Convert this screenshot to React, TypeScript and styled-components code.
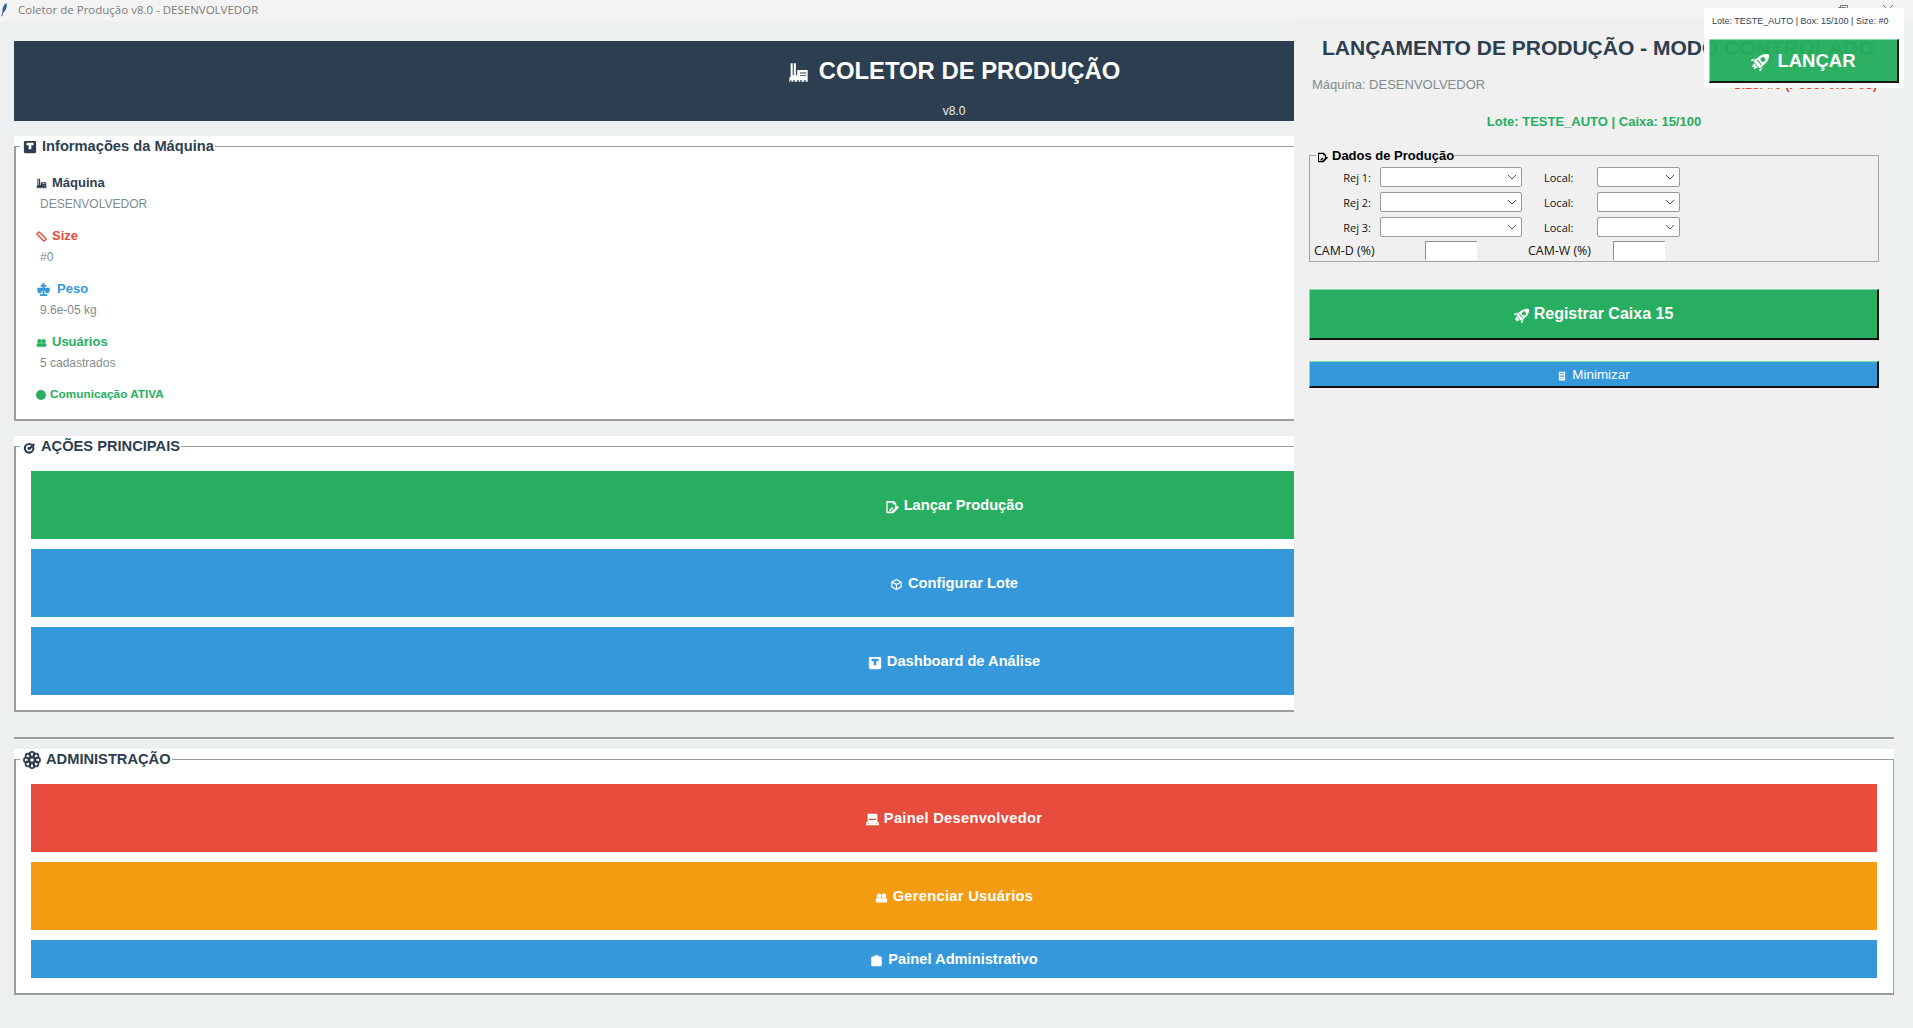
import React from "react";
import styled, { createGlobalStyle } from "styled-components";

const GlobalStyle = createGlobalStyle`
  html, body {
    margin: 0;
    padding: 0;
    background: #ecf0f1;
  }
  * {
    box-sizing: border-box;
  }
`;

const SANS = `"Liberation Sans", Arial, sans-serif`;
const UI = `"Open Sans", "Noto Sans", sans-serif`;

const Page = styled.div`
  position: relative;
  width: 1913px;
  height: 1028px;
  overflow: hidden;
  background: #ecf0f1;
  font-family: ${SANS};
`;

const TitleBar = styled.div`
  display: flex;
  align-items: center;
  height: 21px;
  background: #f3f3f3;
  padding: 0 19px 2px 0;
`;

const AppIcon = styled.span`
  display: flex;
  width: 18px;
  color: #2b5c9e;
`;

const TitleText = styled.span`
  font-family: ${UI};
  font-size: 11.5px;
  color: #7b7b7b;
  white-space: nowrap;
`;

const WindowControls = styled.div`
  display: flex;
  gap: 33px;
  margin-left: auto;
  color: #777;
`;

const Main = styled.main`
  display: flex;
  flex-direction: column;
  padding: 20px 19px 0 14px;
`;

const Banner = styled.header`
  height: 80px;
  background: #2c3e50;
  color: #fff;
  text-align: center;
  padding-top: 14px;
`;

const BannerTitle = styled.h1`
  display: flex;
  align-items: center;
  justify-content: center;
  gap: 10px;
  margin: 0;
  height: 32px;
  font-size: 23.85px;
  font-weight: 700;
  svg {
    margin-top: 3px;
  }
`;

const BannerVersion = styled.div`
  margin-top: 17px;
  font-size: 12px;
  line-height: 14px;
  color: #ecf0f1;
`;

const Panel = styled.section<{ $top: number }>`
  margin-top: ${(p) => p.$top}px;
  background: #fff;
`;

const Frame = styled.fieldset<{ $height: number }>`
  margin: 0;
  height: ${(p) => p.$height}px;
  padding: 15px 16px 0 15px;
  border: 1px solid #9d9d9d;
  border-width: 1px 1px 2px 2px;
`;

const FrameLegend = styled.legend`
  display: flex;
  align-items: center;
  gap: 5px;
  height: 20px;
  margin-left: -11px;
  padding: 0 1px 1px 3px;
  font-size: 14.67px;
  font-weight: 700;
  color: #2c3e50;
  white-space: nowrap;
  svg {
    margin-top: 3px;
  }
`;

const InfoList = styled.div`
  display: flex;
  flex-direction: column;
  gap: 10px;
  padding: 1px 0 0 5px;
`;

const InfoItem = styled.div``;

const InfoLabel = styled.div<{ $color: string; $gap: number }>`
  display: flex;
  align-items: center;
  gap: ${(p) => p.$gap}px;
  height: 20px;
  font-size: 13px;
  font-weight: 700;
  color: ${(p) => p.$color};
  svg {
    margin-top: 3px;
  }
`;

const InfoValue = styled.div`
  height: 21px;
  line-height: 21px;
  margin: 2px 0 0 4px;
  font-size: 12px;
  color: #7f8c8d;
`;

const StatusLine = styled.div`
  display: flex;
  align-items: center;
  gap: 4px;
  margin-top: 3px;
  font-size: 11.8px;
  font-weight: 700;
  color: #27ae60;
  svg {
    margin-top: 2px;
  }
`;

const ButtonStack = styled.div`
  display: flex;
  flex-direction: column;
  gap: 10px;
`;

const ActionButton = styled.button<{
  $bg: string;
  $height: number;
  $raised?: boolean;
  $size?: number;
  $gap?: number;
  $track?: number;
}>`
  display: flex;
  align-items: center;
  justify-content: center;
  gap: ${(p) => p.$gap ?? 5}px;
  width: 100%;
  height: ${(p) => p.$height}px;
  padding: 0;
  background: ${(p) => p.$bg};
  color: #fff;
  font-family: ${SANS};
  font-size: ${(p) => p.$size ?? 14.67}px;
  font-weight: 700;
  letter-spacing: ${(p) => p.$track ?? 0}px;
  border: 0;
  svg {
    margin-top: 3px;
  }
  ${(p) =>
    p.$raised &&
    `
    border-style: solid;
    border-width: 1px 2px 2px 1px;
    border-color: #7fe0a8 #111 #111 #7fe0a8;
  `}
`;

const Separator = styled.hr`
  width: 100%;
  height: 3px;
  margin: 25px 0 9px;
  border: 0;
  border-top: 2px solid #9d9d9d;
  background: #fff;
`;

const EntryWindow = styled.aside`
  position: absolute;
  left: 1294px;
  top: 18px;
  width: 600px;
  height: 700px;
  display: flex;
  flex-direction: column;
  padding: 0 15px;
  background: #f0f0f0;
`;

const EntryTitle = styled.h2`
  margin: 18px 0 0 13px;
  height: 24px;
  line-height: 24px;
  font-size: 21px;
  font-weight: 700;
  color: #2c3e50;
  white-space: nowrap;
`;

const EntryMeta = styled.div`
  display: flex;
  justify-content: space-between;
  align-items: center;
  height: 20px;
  margin: 14px 0 0 3px;
  padding-right: 2px;
`;

const MachineText = styled.span`
  font-size: 13px;
  color: #7f8c8d;
`;

const WarnText = styled.span`
  font-size: 13px;
  font-weight: 700;
  color: #f03c30;
`;

const BatchLine = styled.div`
  margin-top: 19px;
  height: 18px;
  line-height: 18px;
  text-align: center;
  font-size: 13px;
  font-weight: 700;
  color: #27ae60;
`;

const DataFrame = styled.fieldset`
  margin: 16px 0 0;
  height: 115px;
  padding: 4px 0 0;
  border: 1px solid #a6a6a6;
  display: flex;
  flex-direction: column;
`;

const DataLegend = styled.legend`
  display: flex;
  align-items: center;
  gap: 4px;
  height: 16px;
  margin-left: 6px;
  padding: 0 0 0 1px;
  font-size: 13px;
  font-weight: 700;
  color: #000;
  white-space: nowrap;
  svg {
    margin-top: 4px;
  }
`;

const FormRow = styled.div`
  display: flex;
  align-items: center;
  height: 20px;
  margin-bottom: 5px;
  font-family: ${UI};
  font-size: 11px;
  color: #111;
`;

const InputRow = styled(FormRow)`
  height: 19px;
  margin-top: -1px;
`;

const RejLabel = styled.label`
  width: 61px;
  margin-right: 1px;
  text-align: right;
`;

const LocalLabel = styled.label`
  width: 53px;
  margin-left: 22px;
`;

const ComboBox = styled.div<{ $width: number; $first?: boolean }>`
  display: flex;
  align-items: center;
  justify-content: flex-end;
  width: ${(p) => p.$width}px;
  height: 20px;
  margin-left: ${(p) => (p.$first ? 8 : 0)}px;
  padding-right: 3px;
  background: #fff;
  border: 1px solid #9a9a9a;
  border-radius: 2px;
  color: #555;
`;

const CamLabel = styled.label<{ $width: number; $left: number }>`
  width: ${(p) => p.$width}px;
  margin-left: ${(p) => p.$left}px;
  font-size: 12.4px;
  white-space: nowrap;
`;

const CamInput = styled.input`
  width: 52px;
  height: 19px;
  padding: 0 2px;
  background: #fff;
  border: 0;
  border-top: 1px solid #8f8f8f;
  border-left: 1px solid #8f8f8f;
  outline: none;
`;

const RegisterWrap = styled.div`
  margin-top: 27px;
`;

const MinimizeWrap = styled.div`
  margin-top: 21px;
`;

const MiniText = styled.span`
  font-weight: 400;
`;

const QuickBar = styled.div`
  position: absolute;
  left: 1704px;
  top: 8px;
  width: 200px;
  height: 80px;
  padding: 6px 5px 0;
  background: #fff;
  opacity: 0.97;
`;

const QuickInfo = styled.div`
  height: 25px;
  padding-left: 3px;
  line-height: 14px;
  font-size: 9px;
  color: #2c3e50;
  white-space: nowrap;
`;

type IconName =
  | "factory"
  | "ruler"
  | "scale"
  | "users"
  | "dot"
  | "panel"
  | "target"
  | "gear"
  | "docPen"
  | "cube"
  | "laptop"
  | "clipboard"
  | "rocket"
  | "phone"
  | "feather";

const GLYPHS: Record<IconName, React.ReactNode> = {
  factory: (
    <path
      fillRule="evenodd"
      d="M1 15v-3l1-1V1h1.600v9h.8V1H6v9h1V6h8v9h-1.600v-1.200h-1V15h-2v-1.200h-1V15H8v-1.200H7V15H5v-1.200H4V15H2.600v-1.200h-.8V15zM9 8v.7h5V8zM9 10v.7h5V10z"
    />
  ),
  ruler: (
    <rect
      x="5.600"
      y="0.500"
      width="4.800"
      height="15"
      rx="1"
      transform="rotate(-45 8 8)"
      fill="none"
      stroke="currentColor"
      strokeWidth="2"
    />
  ),
  scale: (
    <path d="M7 1h2v2h2v2H9v1h5.500v2H15l-1.500 4h-3l-1-3H9v4h3v2H4v-2h3V9h-.5l-1 3h-3L1 8h.5V6H7V5H5V3h2z" />
  ),
  users: (
    <>
      <circle cx="5" cy="6" r="3" />
      <circle cx="11" cy="6" r="3" />
      <rect x="1" y="9" width="14" height="5" rx="1" />
    </>
  ),
  dot: <circle cx="8" cy="8" r="8" />,
  panel: (
    <path
      fillRule="evenodd"
      d="M2.500 1h11A1.500 1.500 0 0 1 15 2.500v11a1.500 1.500 0 0 1-1.500 1.500h-11A1.500 1.500 0 0 1 1 13.500v-11A1.500 1.500 0 0 1 2.500 1zM4 3v3h2.500v4.500h3V6H12V3z"
    />
  ),
  target: (
    <>
      <circle cx="7.500" cy="9" r="5.300" fill="none" stroke="currentColor" strokeWidth="2.600" />
      <circle cx="7.500" cy="9" r="2" />
      <path d="M7 8.500 13 2.500l.5 1.500 1.500.5-6 6z" />
    </>
  ),
  gear: (
    <g fill="none" stroke="currentColor" strokeWidth="1.500">
      <circle cx="8" cy="8" r="2.300" />
      <circle cx="8" cy="3" r="2.200" />
      <circle cx="8" cy="13" r="2.200" />
      <circle cx="3" cy="8" r="2.200" />
      <circle cx="13" cy="8" r="2.200" />
      <circle cx="4.500" cy="4.500" r="2.200" />
      <circle cx="11.500" cy="4.500" r="2.200" />
      <circle cx="4.500" cy="11.500" r="2.200" />
      <circle cx="11.500" cy="11.500" r="2.200" />
    </g>
  ),
  docPen: (
    <path
      fillRule="evenodd"
      d="M1.500 1H10l3 3v3.500l1-1 2 2-6.500 6.500H1.500zM3 3v10h4.500l4-4V5H9V3zM5 11l3-3 1.500 1.500-3 3H5z"
    />
  ),
  cube: (
    <path
      fillRule="evenodd"
      d="M8 1l6.500 3.500v7L8 15l-6.500-3.500v-7zM8 2.800 4 5l4 2.200L12 5zM3 6.300v4.300l4.300 2.300V8.500zM13 6.300 8.700 8.500v4.400l4.300-2.300z"
    />
  ),
  laptop: (
    <path
      fillRule="evenodd"
      d="M2 1h12v10h1.500l.5 4H0l.5-4H2zM3.500 7v1.500h9V7zM2 12.800v.7h2v-.7zM12 12.800v.7h2v-.7z"
    />
  ),
  clipboard: (
    <path d="M5.500 1.500h5V3h2.500a1.500 1.500 0 0 1 1.500 1.500v9A1.500 1.500 0 0 1 13 15H3a1.500 1.500 0 0 1-1.500-1.500v-9A1.500 1.500 0 0 1 3 3h2.500z" />
  ),
  rocket: (
    <g transform="rotate(50 8 8)">
      <path
        fillRule="evenodd"
        d="M8 -2.500C11.500 0 12.200 3.500 12.200 6.500v5.500H3.800V6.500C3.800 3.500 4.500 0 8 -2.500zM8 2.500a2.100 2.100 0 1 0 0 4.200 2.100 2.100 0 0 0 0-4.200zM5.300 8.200v1h5.400v-1z"
      />
      <path d="M3.200 8.500v4.700H1.200zM12.800 8.500v4.700h2zM5.500 12.600h5l-.9 3.400H8.800L8 14.600 7.200 16h-.8z" />
    </g>
  ),
  phone: (
    <path
      fillRule="evenodd"
      d="M3 1h10v14H3zM5 3v1.500h6V3zM5 6v1h6V6zM5 8.500v1h6v-1zM5 11v1h6v-1z"
    />
  ),
  feather: (
    <path d="M7.500 0C4 2 2.500 6 2.800 10L1.500 15h1l1.200-4C6 9.500 8.500 5 7.500 0z" />
  ),
};

const Icon = ({ name, size = 14 }: { name: IconName; size?: number }) => (
  <svg width={size} height={size} viewBox="0 0 16 16" fill="currentColor" aria-hidden="true">
    {GLYPHS[name]}
  </svg>
);

const Chevron = () => (
  <svg width="12" height="12" viewBox="0 0 12 12" fill="none" stroke="currentColor" strokeWidth="1">
    <path d="M2 4l4 4 4-4" />
  </svg>
);

const MaximizeGlyph = () => (
  <svg width="11" height="12" viewBox="0 0 11 12" fill="none" stroke="currentColor" strokeWidth="1">
    <path d="M2.500 3.500v-2h7v7h-2M.5 3.500h7v7h-7z" />
  </svg>
);

const CloseGlyph = () => (
  <svg width="12" height="12" viewBox="0 0 12 12" fill="none" stroke="currentColor" strokeWidth="1">
    <path d="M1 1l10 10M11 1 1 11" />
  </svg>
);

const REJECT_ROWS = ["Rej 1:", "Rej 2:", "Rej 3:"];

export default function App() {
  return (
    <Page>
      <GlobalStyle />
      <TitleBar>
        <AppIcon>
          <Icon name="feather" size={14} />
        </AppIcon>
        <TitleText>Coletor de Produção v8.0 - DESENVOLVEDOR</TitleText>
        <WindowControls>
          <MaximizeGlyph />
          <CloseGlyph />
        </WindowControls>
      </TitleBar>

      <Main>
        <Banner>
          <BannerTitle>
            <Icon name="factory" size={21} />
            COLETOR DE PRODUÇÃO
          </BannerTitle>
          <BannerVersion>v8.0</BannerVersion>
        </Banner>

        <Panel $top={15}>
          <Frame $height={285}>
            <FrameLegend>
              <Icon name="panel" size={14} />
              Informações da Máquina
            </FrameLegend>
            <InfoList>
              <InfoItem>
                <InfoLabel $color="#2c3e50" $gap={5}>
                  <Icon name="factory" size={11} />
                  Máquina
                </InfoLabel>
                <InfoValue>DESENVOLVEDOR</InfoValue>
              </InfoItem>
              <InfoItem>
                <InfoLabel $color="#e74c3c" $gap={5}>
                  <Icon name="ruler" size={11} />
                  Size
                </InfoLabel>
                <InfoValue>#0</InfoValue>
              </InfoItem>
              <InfoItem>
                <InfoLabel $color="#3498db" $gap={6}>
                  <Icon name="scale" size={15} />
                  Peso
                </InfoLabel>
                <InfoValue>9.6e-05 kg</InfoValue>
              </InfoItem>
              <InfoItem>
                <InfoLabel $color="#27ae60" $gap={5}>
                  <Icon name="users" size={11} />
                  Usuários
                </InfoLabel>
                <InfoValue>5 cadastrados</InfoValue>
              </InfoItem>
              <StatusLine>
                <Icon name="dot" size={10} />
                Comunicação ATIVA
              </StatusLine>
            </InfoList>
          </Frame>
        </Panel>

        <Panel $top={15}>
          <Frame $height={276}>
            <FrameLegend>
              <Icon name="target" size={13} />
              AÇÕES PRINCIPAIS
            </FrameLegend>
            <ButtonStack>
              <ActionButton $bg="#27ae60" $height={68}>
                <Icon name="docPen" size={14} />
                Lançar Produção
              </ActionButton>
              <ActionButton $bg="#3498db" $height={68}>
                <Icon name="cube" size={13} />
                Configurar Lote
              </ActionButton>
              <ActionButton $bg="#3498db" $height={68}>
                <Icon name="panel" size={14} />
                Dashboard de Análise
              </ActionButton>
            </ButtonStack>
          </Frame>
        </Panel>

        <Separator />

        <Panel $top={0}>
          <Frame $height={246}>
            <FrameLegend>
              <Icon name="gear" size={18} />
              ADMINISTRAÇÃO
            </FrameLegend>
            <ButtonStack>
              <ActionButton $bg="#e74c3c" $height={68} $track={0.3}>
                <Icon name="laptop" size={13} />
                Painel Desenvolvedor
              </ActionButton>
              <ActionButton $bg="#f39c12" $height={68} $track={0.3}>
                <Icon name="users" size={13} />
                Gerenciar Usuários
              </ActionButton>
              <ActionButton $bg="#3498db" $height={38}>
                <Icon name="clipboard" size={13} />
                Painel Administrativo
              </ActionButton>
            </ButtonStack>
          </Frame>
        </Panel>
      </Main>

      <EntryWindow>
        <EntryTitle>LANÇAMENTO DE PRODUÇÃO - MODO CONTROLADO</EntryTitle>
        <EntryMeta>
          <MachineText>Máquina: DESENVOLVEDOR</MachineText>
          <WarnText>Size: #0 (Peso: 9.6e-05)</WarnText>
        </EntryMeta>
        <BatchLine>Lote: TESTE_AUTO | Caixa: 15/100</BatchLine>
        <DataFrame>
          <DataLegend>
            <Icon name="docPen" size={11} />
            Dados de Produção
          </DataLegend>
          {REJECT_ROWS.map((rej) => (
            <FormRow key={rej}>
              <RejLabel>{rej}</RejLabel>
              <ComboBox $width={142} $first>
                <Chevron />
              </ComboBox>
              <LocalLabel>Local:</LocalLabel>
              <ComboBox $width={83}>
                <Chevron />
              </ComboBox>
            </FormRow>
          ))}
          <InputRow>
            <CamLabel $width={111} $left={4}>
              CAM-D (%)
            </CamLabel>
            <CamInput />
            <CamLabel $width={85} $left={51}>
              CAM-W (%)
            </CamLabel>
            <CamInput />
          </InputRow>
        </DataFrame>
        <RegisterWrap>
          <ActionButton $bg="#27ae60" $height={51} $size={16} $gap={5} $raised>
            <Icon name="rocket" size={15} />
            Registrar Caixa 15
          </ActionButton>
        </RegisterWrap>
        <MinimizeWrap>
          <ActionButton $bg="#3498db" $height={27} $size={13.4} $raised>
            <Icon name="phone" size={10} />
            <MiniText>Minimizar</MiniText>
          </ActionButton>
        </MinimizeWrap>
      </EntryWindow>

      <QuickBar>
        <QuickInfo>Lote: TESTE_AUTO | Box: 15/100 | Size: #0</QuickInfo>
        <ActionButton $bg="#27ae60" $height={44} $size={18.5} $gap={8} $raised>
          <Icon name="rocket" size={18} />
          LANÇAR
        </ActionButton>
      </QuickBar>
    </Page>
  );
}
